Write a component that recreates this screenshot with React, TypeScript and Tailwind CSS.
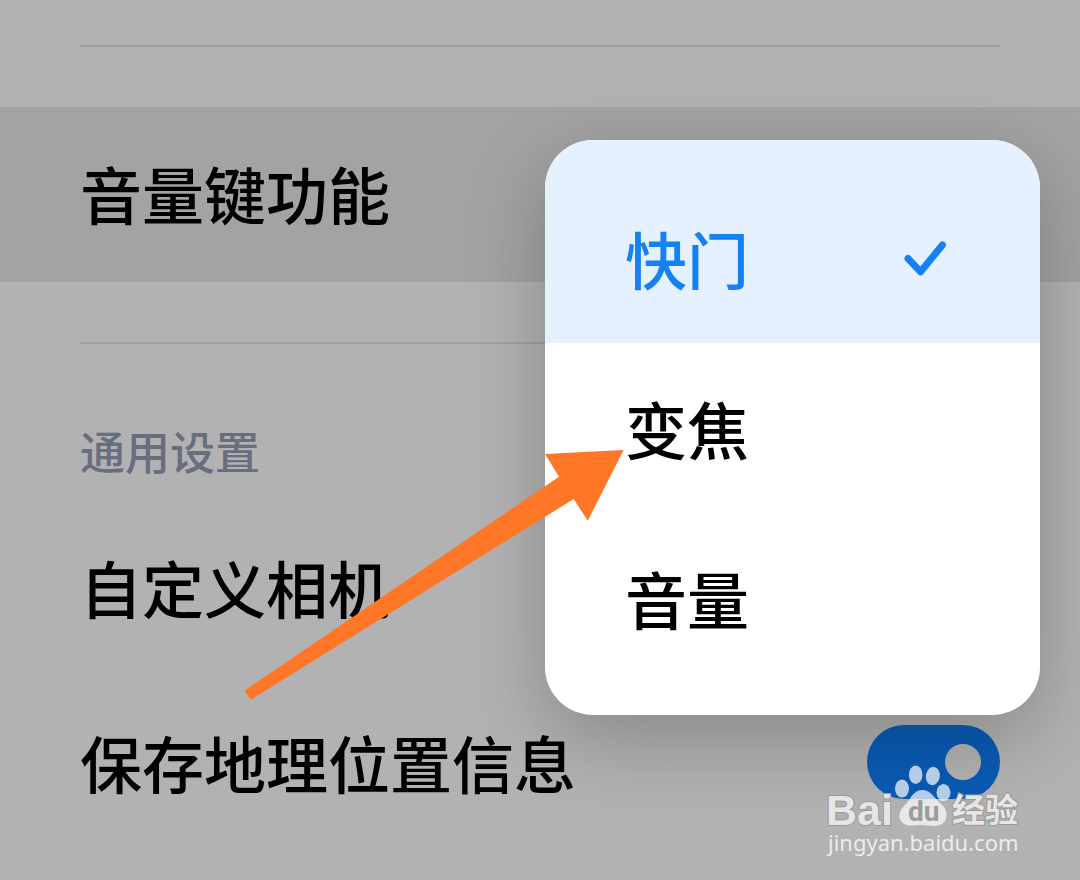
import { useState } from "react";

interface MenuOption {
  id: string;
  label: string;
}

const VOLUME_KEY_OPTIONS: MenuOption[] = [
  { id: "shutter", label: "快门" },
  { id: "zoom", label: "变焦" },
  { id: "volume", label: "音量" },
];

function CheckMark() {
  return (
    <svg viewBox="0 0 44 36" className="w-11 h-9" fill="none" aria-hidden="true">
      <path
        d="M4 18.5 16.6 31.8 38.4 5"
        stroke="#1482f5"
        strokeWidth="7"
        strokeLinecap="round"
        strokeLinejoin="round"
      />
    </svg>
  );
}

function PointerArrow() {
  return (
    <svg
      viewBox="0 0 380 252"
      className="absolute top-[310px] right-[416px] w-[380px] h-[252px] pointer-events-none"
      aria-hidden="true"
    >
      <polygon
        points="379.6,0 301,4 315,26.7 .5,240.7 7,249.7 329.7,49 343.8,70.7"
        fill="#ff7626"
      />
    </svg>
  );
}

function OptionsMenu() {
  const [selected, setSelected] = useState("shutter");

  return (
    <div className="absolute top-[140px] right-10 w-[495px]">
      <div
        role="listbox"
        aria-label="音量键功能"
        className="bg-white rounded-[48px] overflow-hidden pb-8 shadow-[0_24px_80px_rgba(0,0,0,0.24)]"
      >
        {VOLUME_KEY_OPTIONS.map((option) => {
          const active = option.id === selected;
          return (
            <button
              key={option.id}
              type="button"
              role="option"
              aria-selected={active}
              onClick={() => setSelected(option.id)}
              className={`w-full flex items-center justify-between pl-20 pr-[92px] h-[170px] first:h-[203px] first:pt-8 ${
                active ? "bg-[#e5f1ff] text-[#1482f5]" : "text-black"
              }`}
            >
              <span>{option.label}</span>
              {active && <CheckMark />}
            </button>
          );
        })}
      </div>
      <PointerArrow />
    </div>
  );
}

function Watermark() {
  return (
    <div className="absolute top-[764px] right-[60px] w-48 pointer-events-none">
      <svg viewBox="0 0 192 66" className="w-48 h-[66px] overflow-visible" role="img">
        <g fill="#fff" fillOpacity="0.7">
          <ellipse cx="74" cy="24.6" rx="7" ry="9" />
          <ellipse cx="87.7" cy="10.8" rx="6.8" ry="9.2" />
          <ellipse cx="104.8" cy="12" rx="7" ry="9.2" transform="rotate(10 104.8 12)" />
          <ellipse cx="115.5" cy="28.5" rx="7" ry="8.6" />
          <path d="M94.5 26C102 26 106 33 111 38C116 42 119 46 118.5 52C118 59 112 62 106 62C101 62 98 61 94.5 61C90 61 86 62 82 61.5C75 61 71 57 71.5 51C72 44 78 41 81 36C84 31 88 26 94.5 26Z" />
        </g>
        <g
          fill="#e6e6e6"
          stroke="#9a9a9a"
          strokeWidth="2"
          paintOrder="stroke"
          className="font-bold"
        >
          <text x="-2" y="61" fontSize="43" fontFamily="Liberation Sans, sans-serif">
            Bai
          </text>
          <text x="124" y="58" fontSize="33" fontFamily="Noto Sans CJK SC, sans-serif">
            经验
          </text>
        </g>
        <text
          x="80"
          y="57"
          fontSize="28"
          fill="#9c9c9c"
          fontFamily="Roboto, sans-serif"
          className="font-bold"
        >
          du
        </text>
      </svg>
      <p className="font-['Noto_Sans','Noto_Sans_CJK_SC',sans-serif] text-[22px] leading-6 font-normal text-[#ececec]">
        jingyan.baidu.com
      </p>
    </div>
  );
}

export default function App() {
  const [saveLocation, setSaveLocation] = useState(true);

  return (
    <div className="relative min-h-screen overflow-hidden bg-[#b2b2b2] text-black text-[62px] leading-[90px] font-medium font-['Noto_Sans_CJK_SC',sans-serif]">
      <main>
        <div className="px-20 pt-[45px] pb-[60px]">
          <hr className="border-t-2 border-[#a0a0a0]" />
        </div>
        <button
          type="button"
          className="w-full h-[175px] px-20 pb-1 flex items-center bg-[#a3a3a3] text-left"
        >
          音量键功能
        </button>
        <div className="px-20 pt-[60px]">
          <hr className="border-t-2 border-[#a0a0a0]" />
        </div>
        <section className="px-20">
          <h2 className="pt-[75px] pb-4 text-[45px] leading-[64px] font-medium text-[#696d80]">
            通用设置
          </h2>
          <button type="button" className="w-full h-44 flex items-center text-left">
            自定义相机
          </button>
          <div className="h-[174px] flex items-center justify-between">
            <label htmlFor="save-location">保存地理位置信息</label>
            <input
              id="save-location"
              type="checkbox"
              checked={saveLocation}
              onChange={(e) => setSaveLocation(e.target.checked)}
              className="appearance-none flex items-center w-[133px] h-[74px] px-[19px] rounded-full bg-[#8a8a8a] checked:bg-[#0a5bb4] checked:justify-end before:size-9 before:rounded-full before:bg-[#b2b2b2]"
            />
          </div>
        </section>
      </main>
      <OptionsMenu />
      <Watermark />
    </div>
  );
}
